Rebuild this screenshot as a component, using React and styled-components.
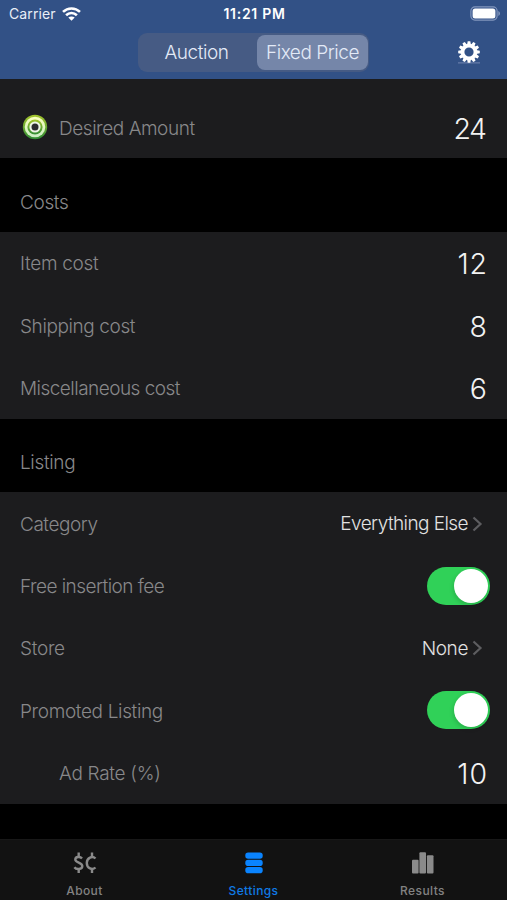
import styled, {createGlobalStyle} from 'styled-components';

const GlobalStyle = createGlobalStyle`
    * { box-sizing:border-box; }
    body {
        margin:0;
        background-color:black;
        font-family:'Inter', 'Liberation Sans', sans-serif;
    }
`;

const COSTS = [
    {label:'Item cost', value:'12', valueTrack:0.9},
    {label:'Shipping cost', track:-0.4, value:'8'},
    {label:'Miscellaneous cost', track:-0.53, value:'6'},
];

const LISTING = [
    {label:'Category', track:-0.45, link:'Everything Else', linkTrack:-0.57},
    {label:'Free insertion fee', track:-0.54, on:true},
    {label:'Store', link:'None', linkTrack:-0.4},
    {label:'Promoted Listing', track:-0.35, on:true},
    {label:'Ad Rate (%)', value:'10', valueTrack:0.9, indent:true},
];

const WifiIcon = () => (
    <svg width='19' height='14' viewBox='0 0 19 14' fill='none' stroke='white' strokeWidth='2.6'>
        <path d='M1 4.900C5.800 .3 13.200 .3 18 4.900' />
        <path d='M4.100 8.300C7.200 5.300 11.800 5.300 14.900 8.300' />
        <path d='M9.500 13.800L6.300 10.600C8.100 9 10.900 9 12.700 10.600Z' fill='white' stroke='none' />
    </svg>
);

const BatteryIcon = () => (
    <svg width='31' height='15' viewBox='0 0 31 15'>
        <rect x='.9' y='.9' width='26.2' height='13.2' rx='4' fill='none' stroke='#8296bd' strokeWidth='1.2' />
        <rect x='2.6' y='2.5' width='22.8' height='10' rx='2.5' fill='white' />
        <path d='M28.3 5v5c1-.4 1.7-1.4 1.7-2.5S29.3 5.4 28.3 5Z' fill='#8296bd' />
    </svg>
);

const GearIcon = () => {
    const teeth = [...Array(12)].map((_, i) => i * 30);
    return (
        <svg width='24' height='24' viewBox='-12 -12 24 24'>
            <path d='M-11 10.9H11' stroke='#7388b3' strokeWidth='1' />
            {teeth.map((deg) => (
                <path key={deg} d='M-2 -7L-1.3 -10.8H1.3L2 -7Z' fill='white' transform={`rotate(${deg})`} />
            ))}
            <circle r='6.4' fill='none' stroke='white' strokeWidth='3.6' />
        </svg>
    );
};

const TargetIcon = () => (
    <svg width='26' height='26' viewBox='-13 -13 26 26'>
        <defs>
            <linearGradient id='ring' x1='0' y1='0' x2='0' y2='1'>
                <stop offset='0' stopColor='#a5c52c' />
                <stop offset='1' stopColor='#2f8d35' />
            </linearGradient>
            <linearGradient id='pale' x1='0' y1='0' x2='0' y2='1'>
                <stop offset='0' stopColor='#fbffbd' />
                <stop offset='1' stopColor='#c9efc4' />
            </linearGradient>
        </defs>
        <circle r='12.2' fill='url(#ring)' />
        <circle r='10.3' fill='url(#pale)' />
        <circle r='7.6' fill='url(#ring)' />
        <circle r='5.6' fill='#edf5e6' />
        <circle r='3.5' fill='#2b2b30' />
    </svg>
);

const Chevron = () => (
    <svg width='11' height='16' viewBox='0 0 11 16' fill='none' stroke='#5d5d60' strokeWidth='2.200'>
        <path d='M1.500 1.500L8.500 8L1.500 14.500' />
    </svg>
);

const MoneyIcon = () => (
    <svg width='24' height='22' viewBox='0 0 24 22' fill='none' stroke='#8a8a8a' strokeWidth='2.400'>
        <path d='M9 6.400C7.500 4.500 2.300 4.300 2.300 7.500C2.300 11 9.300 10.300 9.300 14C9.300 17.700 3.200 17.800 1.400 15.300' />
        <path d='M5.700 .5V5M5.700 16.500V21' />
        <path d='M22.500 6.500C19.500 3.600 13.800 5.400 13.800 11C13.800 16.600 19.500 18.400 22.500 15.500' />
        <path d='M19 .5V5M19 16.500V21' />
    </svg>
);

const StackIcon = () => (
    <svg width='18' height='22' viewBox='0 0 18 22' fill='#0a84ff'>
        <rect x='.3' y='.5' width='17.4' height='6.3' rx='2.8' />
        <rect x='.3' y='7.7' width='17.4' height='6.3' rx='2.8' />
        <rect x='.3' y='14.9' width='17.4' height='6.3' rx='2.8' />
    </svg>
);

const BarsIcon = () => (
    <svg width='22' height='22' viewBox='0 0 22 22' fill='#8a8a8a'>
        <rect x='0' y='7.8' width='6.6' height='13.8' rx='1' />
        <rect x='7.4' y='.3' width='6.6' height='21.3' rx='1' />
        <rect x='14.9' y='3.3' width='6.6' height='18.3' rx='1' />
    </svg>
);

function SettingRow({item}) {
    return (
        <Row>
            <Label $indent={item.indent} $track={item.track}>{item.label}</Label>
            {item.value && <Value $track={item.valueTrack}>{item.value}</Value>}
            {item.link && <Link $track={item.linkTrack}>{item.link}<Chevron /></Link>}
            {item.on && <Switch><Knob /></Switch>}
        </Row>
    );
}

function App() {
    return (
        <Screen>
            <GlobalStyle />
            <Header>
                <StatusBar>
                    <Carrier>Carrier<WifiIcon /></Carrier>
                    <Time>11:21 PM</Time>
                    <Battery><BatteryIcon /></Battery>
                </StatusBar>
                <NavBar>
                    <Segments>
                        <Segment>Auction</Segment>
                        <Segment $active>Fixed Price</Segment>
                    </Segments>
                    <GearButton><GearIcon /></GearButton>
                </NavBar>
            </Header>
            <Amount>
                <Row $icon>
                    <TargetIcon />
                    <Label $icon $track={-0.45}>Desired Amount</Label>
                    <Value $track={-1.4}>24</Value>
                </Row>
            </Amount>
            <SectionTitle>Costs</SectionTitle>
            <Group>
                {COSTS.map((item) => <SettingRow key={item.label} item={item} />)}
            </Group>
            <SectionTitle>Listing</SectionTitle>
            <Group>
                {LISTING.map((item) => <SettingRow key={item.label} item={item} />)}
            </Group>
            <TabBar>
                <Tab><MoneyIcon /><TabText>About</TabText></Tab>
                <Tab $active><StackIcon /><TabText>Settings</TabText></Tab>
                <Tab><BarsIcon /><TabText>Results</TabText></Tab>
            </TabBar>
        </Screen>
    );
}

export default App;

const Screen = styled.div`
    width:507px;
    height:900px;
    background-color:black;
    display:flex;
    flex-flow:column nowrap;
    overflow:hidden;
`;

const Header = styled.div`
    height:79px;
    flex:none;
    background-color:#325186;
`;

const StatusBar = styled.div`
    height:27px;
    display:grid;
    grid-template-columns:1fr auto 1fr;
    align-items:center;
    padding:0 6px 0 9px;
    color:white;
    font-size:14px;
`;

const Carrier = styled.div`
    display:flex;
    align-items:center;
    gap:6px;
    letter-spacing:0.1px;
    color:#e9eef7;
`;

const Time = styled.div`
    font-weight:600;
    font-size:14px;
    letter-spacing:0.7px;
    margin-right:1px;
`;

const Battery = styled.div`
    display:flex;
    justify-content:flex-end;
`;

const NavBar = styled.div`
    height:50px;
    display:grid;
    grid-template-columns:1fr auto 1fr;
    align-items:center;
`;

const Segments = styled.div`
    grid-column:2;
    display:flex;
    justify-content:space-between;
    width:231px;
    height:39px;
    padding:2px 1px 2px 2px;
    border-radius:9px;
    background-color:#465b84;
`;

const Segment = styled.div`
    width:${(props) => props.$active ? '111px' : '113px'};
    display:flex;
    align-items:center;
    justify-content:center;
    padding-top:1px;
    border-radius:8px;
    background-color:${(props) => props.$active ? '#7586a9' : 'transparent'};
    color:#e3eaf7;
    font-size:19px;
    font-weight:300;
    letter-spacing:-0.45px;
`;

const GearButton = styled.div`
    display:flex;
    justify-content:flex-end;
    padding-right:26px;
`;

const Amount = styled.div`
    flex:none;
    padding-top:17px;
    background-color:#1c1c1e;
`;

const Group = styled.div`
    flex:none;
    background-color:#1c1c1e;
`;

const Row = styled.div`
    height:62.3px;
    display:flex;
    align-items:center;
    padding:0 20px 0 ${(props) => props.$icon ? '22px' : '20px'};
`;

const Label = styled.div`
    flex:1;
    margin-left:${(props) => props.$indent ? '39px' : props.$icon ? '11px' : '0'};
    padding-top:2px;
    color:#88888a;
    font-size:19px;
    font-weight:300;
    letter-spacing:${(props) => props.$track ?? -0.3}px;
`;

const Value = styled.div`
    padding-top:2px;
    color:#f2f2f2;
    font-size:28.5px;
    font-weight:300;
    letter-spacing:${(props) => props.$track ?? 0}px;
    margin-right:${(props) => -(props.$track ?? 0)}px;
`;

const Link = styled.div`
    display:flex;
    align-items:center;
    gap:4px;
    padding-top:1px;
    margin-right:4px;
    color:#e2e2e2;
    font-size:19px;
    font-weight:300;
    letter-spacing:${(props) => props.$track}px;
`;

const Switch = styled.div`
    width:63px;
    height:38px;
    margin-right:-3px;
    padding:2px;
    border-radius:19px;
    background-color:#30d158;
    display:flex;
    justify-content:flex-end;
`;

const Knob = styled.div`
    width:34px;
    height:34px;
    border-radius:50%;
    background-color:white;
    box-shadow:-1px 2px 4px rgba(0,0,0,0.15);
`;

const SectionTitle = styled.div`
    height:73.5px;
    flex:none;
    display:flex;
    align-items:center;
    padding:15px 20px 0;
    color:#88888a;
    font-size:19px;
    font-weight:300;
    letter-spacing:-0.35px;
`;

const TabBar = styled.div`
    height:61px;
    flex:none;
    margin-top:auto;
    display:grid;
    grid-template-columns:repeat(3, 1fr);
    background-color:#121212;
    border-top:1px solid #181818;
`;

const Tab = styled.div`
    display:flex;
    flex-flow:column nowrap;
    align-items:center;
    padding-top:12px;
    color:${(props) => props.$active ? '#0f7ae5' : '#828282'};
`;

const TabText = styled.div`
    margin-top:9px;
    font-size:12px;
    line-height:15px;
    font-weight:500;
    letter-spacing:0.4px;
`;
